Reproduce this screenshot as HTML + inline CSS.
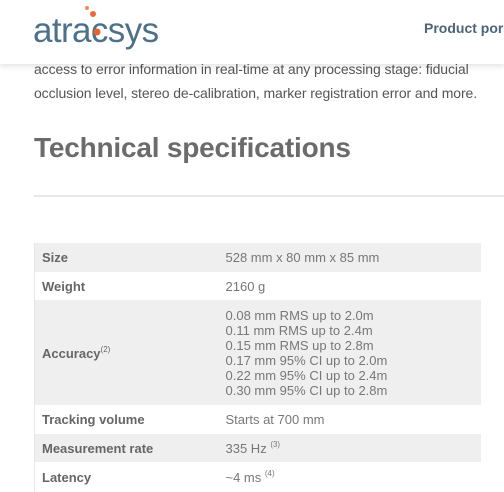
<!DOCTYPE html>
<html><head><meta charset="utf-8"><style>
*{margin:0;padding:0;box-sizing:border-box}
body{width:504px;height:489px;overflow:hidden;background:#fff;font-family:"Liberation Sans",Arial,sans-serif;position:relative}
.hdr{position:absolute;left:0;top:0;width:504px;height:64px;background:#fff;box-shadow:0 2px 6px rgba(0,0,0,0.12);z-index:2}
.logo{position:absolute;left:33px;top:11px;font-size:35px;color:#4d7189;letter-spacing:-0.6px;font-family:"Liberation Sans",sans-serif}
.nav{position:absolute;left:424px;top:20px;font-size:14px;font-weight:bold;color:#4c6478;white-space:nowrap}
.txt{position:absolute;left:34px;top:57px;font-size:14px;line-height:24px;color:#555;width:470px;letter-spacing:-0.1px}
h1{position:absolute;left:34px;top:132px;font-size:28px;font-weight:bold;color:#6b6b6b;letter-spacing:-0.2px}
.hr{position:absolute;left:34px;top:195px;width:470px;height:2px;background:#e8e8e8}
table{position:absolute;left:34px;top:243px;width:447px;border-collapse:collapse;font-size:13px;color:#777}
td{padding:0 7px;vertical-align:middle;border-left:1px solid #e6e6e6}
td+td{border-left:none;padding-left:0}
tr:nth-child(odd){background:#efefef}
td:first-child{font-weight:bold;width:191px;color:#666}
sup{font-size:8px;vertical-align:6px;font-weight:normal}
</style></head><body>
<div class="txt">access to error information in real-time at any processing stage: fiducial occlusion level, stereo de-calibration, marker registration error and more.</div>
<div class="hdr">
<div class="logo">atracsys</div>
<svg style="position:absolute;left:80px;top:5px" width="30" height="40"><circle cx="7" cy="3" r="2" fill="#f08a5a"/><circle cx="13" cy="9" r="3" fill="#ec6a3a"/><circle cx="17" cy="27" r="3.5" fill="#e8622e"/></svg>
<div class="nav">Product por</div>
</div>
<h1>Technical specifications</h1>
<div class="hr"></div>
<table>
<tr style="height:29px"><td>Size</td><td>528 mm x 80 mm x 85 mm</td></tr>
<tr style="height:28px"><td>Weight</td><td>2160 g</td></tr>
<tr style="height:105px"><td>Accuracy<sup>(2)</sup></td><td style="line-height:15px">0.08 mm RMS up to 2.0m<br>0.11 mm RMS up to 2.4m<br>0.15 mm RMS up to 2.8m<br>0.17 mm 95% CI up to 2.0m<br>0.22 mm 95% CI up to 2.4m<br>0.30 mm 95% CI up to 2.8m</td></tr>
<tr style="height:29px"><td>Tracking volume</td><td>Starts at 700 mm</td></tr>
<tr style="height:28px"><td>Measurement rate</td><td>335 Hz <sup>(3)</sup></td></tr>
<tr style="height:30px"><td>Latency</td><td>~4 ms <sup>(4)</sup></td></tr>
</table>
</body></html>
